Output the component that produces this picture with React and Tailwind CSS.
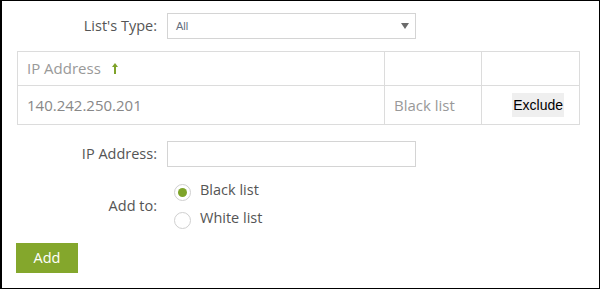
export default function App() {
  return (
    <div className="w-[600px] h-[289px] border border-black border-l-2 bg-white text-[14.5px] text-[#555] font-['Open_Sans',sans-serif] overflow-hidden">
      <div className="mt-[12px] flex items-center">
        <label className="w-[155px] text-right">List's Type:</label>
        <div className="ml-[10px] w-[249px] h-[26px] border border-[#d4d4d4] flex items-center justify-between pl-[8px] pr-[6px]">
          <span className="font-['Liberation_Sans',sans-serif] text-[11px] text-[#667080]">All</span>
          <svg width="8" height="6" viewBox="0 0 8 6">
            <path d="M0 0 H8 L4 6 Z" fill="#6b6b6b" />
          </svg>
        </div>
      </div>

      <table className="mt-[12px] ml-[15px] w-[563px] border-collapse text-[15px]">
        <thead>
          <tr className="h-[34px]">
            <th className="border border-[#dcdcdc] text-left font-normal text-[#999] pl-[9px] w-[367px]">
              <span className="inline-flex items-center gap-[11px]">
                IP Address
                <svg width="6" height="11" viewBox="0 0 6 11">
                  <path d="M3 0 L6 4 H4 V11 H2 V4 H0 Z" fill="#7fa32a" />
                </svg>
              </span>
            </th>
            <th className="border border-[#dcdcdc] w-[97px]"></th>
            <th className="border border-[#dcdcdc]"></th>
          </tr>
        </thead>
        <tbody>
          <tr className="h-[39px]">
            <td className="border border-[#dcdcdc] pl-[9px] text-[#888]">140.242.250.201</td>
            <td className="border border-[#dcdcdc] pl-[9px] text-[#999]">Black list</td>
            <td className="border border-[#dcdcdc] text-right pr-[15px]">
              <button className="bg-[#efefef] h-[24px] px-[1px] font-['Liberation_Sans',sans-serif] text-[14px] text-black">Exclude</button>
            </td>
          </tr>
        </tbody>
      </table>

      <div className="mt-[16px] flex items-center">
        <label className="w-[155px] text-right">IP Address:</label>
        <input className="ml-[10px] w-[249px] h-[26px] border border-[#d4d4d4] outline-none" />
      </div>

      <div className="mt-[15px] flex items-center">
        <label className="w-[155px] text-right">Add to:</label>
        <div className="ml-[17px] flex flex-col gap-[8px]">
          <label className="flex items-center gap-[9px] h-[20px]">
            <span className="w-[17px] h-[17px] rounded-full border border-[#cfcfcf] flex items-center justify-center">
              <span className="w-[9px] h-[9px] rounded-full bg-[#7ea42a]"></span>
            </span>
            <span className="-mt-[4px]">Black list</span>
          </label>
          <label className="flex items-center gap-[9px] h-[20px]">
            <span className="w-[17px] h-[17px] rounded-full border border-[#cfcfcf]"></span>
            <span className="-mt-[4px]">White list</span>
          </label>
        </div>
      </div>

      <button className="mt-[13px] ml-[14px] w-[62px] h-[30px] bg-[#84a72c] text-white text-[14.5px]">Add</button>
    </div>
  );
}
